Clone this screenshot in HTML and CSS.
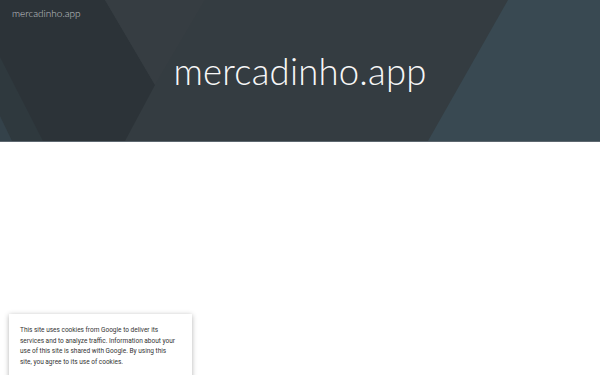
FILE: index.html
```html
<!DOCTYPE html>
<html lang="pt">
<head>
  <meta charset="UTF-8">
  <meta name="viewport" content="width=device-width, initial-scale=1.0">
  <title>mercadinho.app</title>
  <link rel="stylesheet" href="styles.css">
</head>
<body>

  <header class="hero">
    <svg class="hero-bg" viewBox="0 0 600 141" preserveAspectRatio="none">
      <rect width="600" height="141" fill="#343c41"/>
      <polygon points="0,0 105,0 155,85 125,141 0,141" fill="#2c3338"/>
      <polygon points="105,0 205,0 155,85" fill="#363d42"/>
      <polygon points="0,57 43,141 0,141" fill="#2f393e"/>
      <polygon points="0,116 12,141 0,141" fill="#34424a"/>
      <polygon points="508,0 600,0 600,141 428,141" fill="#394952"/>
    </svg>
    <div class="site-name">mercadinho.app</div>
    <h1>mercadinho.app</h1>
  </header>

  <div class="cookie">
    <p>This site uses cookies from Google to deliver its<br>
      services and to analyze traffic. Information about your<br>
      use of this site is shared with Google. By using this<br>
      site, you agree to its use of cookies.</p>
    <div class="cookie-actions">
      <span class="learn">LEARN MORE</span>
      <span class="ok">GOT IT</span>
    </div>
  </div>

</body>
</html>
```

FILE: styles.css
```css
body {
  margin: 0;
  background-color: #ffffff;
  font-family: 'Lato', sans-serif;
  height: 375px;
  overflow: hidden;
  position: relative;
}

.hero {
  position: relative;
  height: 141px;
  border-bottom: 1px solid #5d676f;
  overflow: hidden;
}

.hero-bg {
  position: absolute;
  top: 0;
  left: 0;
  width: 100%;
  height: 100%;
}

.site-name {
  position: relative;
  padding: 7px 0 0 12px;
  font-size: 10px;
  font-weight: 300;
  color: #c4c8cb;
}

h1 {
  position: relative;
  margin: 0;
  padding-top: 30px;
  text-align: center;
  font-size: 36.5px;
  font-weight: 300;
  color: #f7f7f7;
  letter-spacing: 0.2px;
}

.cookie {
  position: absolute;
  left: 9px;
  top: 314px;
  width: 163px;
  padding: 11px 9px 10px 11px;
  background-color: white;
  box-shadow: 0 1px 5px rgba(0,0,0,0.3);
  font-family: 'Roboto', sans-serif;
  font-size: 6.5px;
  line-height: 10.5px;
  color: #333333;
  white-space: nowrap;
}

.cookie p {
  margin: 0;
}

.cookie-actions {
  display: flex;
  justify-content: flex-end;
  gap: 12px;
  margin-top: 9px;
  font-size: 6px;
  font-weight: 500;
  letter-spacing: 0.4px;
}

.learn {
  color: #9e9e9e;
}

.ok {
  color: #4285f4;
}
```
